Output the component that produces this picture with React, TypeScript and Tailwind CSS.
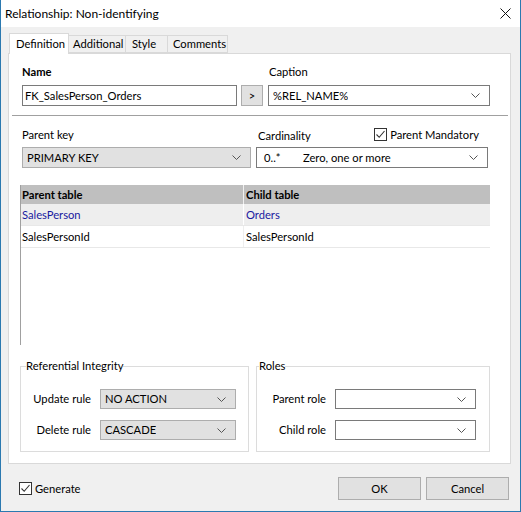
import React from 'react';

const font = { fontFamily: 'Lato, "Liberation Sans", Arial, sans-serif' };

function Chevron() {
  return (
    <svg width="9" height="5" viewBox="0 0 9 5" className="shrink-0">
      <path d="M0.5 0.5 L4.5 4.5 L8.5 0.5" fill="none" stroke="#555" strokeWidth="1" />
    </svg>
  );
}

function Check({ checked }: { checked: boolean }) {
  return (
    <div className="w-[13px] h-[13px] border border-[#333] bg-white flex items-center justify-center shrink-0">
      {checked && (
        <svg width="11" height="11" viewBox="0 0 11 11">
          <path d="M1.5 5.5 L4.2 8.3 L9.5 2" fill="none" stroke="#333" strokeWidth="1.1" />
        </svg>
      )}
    </div>
  );
}

function Select({ value, gray, className }: { value?: React.ReactNode; gray?: boolean; className: string }) {
  return (
    <div
      className={`flex items-center justify-between pl-[4px] pr-[9px] border ${
        gray ? 'bg-[#e1e1e1] border-[#adadad]' : 'bg-white border-[#7a7a7a]'
      } ${className}`}
    >
      <span className="truncate">{value}</span>
      <Chevron />
    </div>
  );
}

export default function App() {
  return (
    <div
      style={font}
      className="w-[521px] h-[512px] border border-[#2b79b0] border-t-0 bg-[#f0f0f0] flex flex-col text-[11.2px] leading-[14px] text-black overflow-hidden"
    >
      {/* title bar */}
      <div className="h-[27px] bg-white flex items-center justify-between pl-[4px] pr-[9px] shrink-0">
        <span className="text-[12px] pt-[1px]">Relationship: Non-identifying</span>
        <svg width="11" height="11" viewBox="0 0 11 11">
          <path d="M0.5 0.5 L10.5 10.5 M10.5 0.5 L0.5 10.5" stroke="#111" strokeWidth="1" />
        </svg>
      </div>

      {/* tabs */}
      <div className="flex items-end ml-[8px] mt-[6px] h-[20px] relative z-10">
        <div className="h-[21px] w-[60px] bg-white border border-[#d9d9d9] border-b-0 flex items-center pl-[6px] -mb-[1px]">
          Definition
        </div>
        <div className="h-[18px] w-[57px] bg-[#f0f0f0] border border-[#d9d9d9] border-l-0 flex items-center pl-[4px]">
          Additional
        </div>
        <div className="h-[18px] w-[42px] bg-[#f0f0f0] border border-[#d9d9d9] border-l-0 flex items-center pl-[6px]">
          Style
        </div>
        <div className="h-[18px] w-[60px] bg-[#f0f0f0] border border-[#d9d9d9] border-l-0 flex items-center pl-[5px]">
          Comments
        </div>
      </div>

      {/* tab panel */}
      <div className="ml-[7px] mr-[9px] h-[411px] bg-white border border-[#d9d9d9] pl-[11px] pr-[19px] flex flex-col">
        {/* name / caption */}
        <div className="flex mt-[11px]">
          <div className="flex flex-col ml-[2px]">
            <span className="font-bold">Name</span>
            <div className="flex mt-[6px]">
              <div className="w-[215px] h-[21px] border border-[#7a7a7a] flex items-center pl-[2px]">FK_SalesPerson_Orders</div>
              <div className="w-[22px] h-[21px] ml-[4px] border border-[#adadad] bg-[#e1e1e1] flex items-center justify-center">&gt;</div>
            </div>
          </div>
          <div className="flex flex-col ml-[5px]">
            <span className="ml-[1px]">Caption</span>
            <Select value="%REL_NAME%" className="mt-[6px] w-[222px] h-[21px]" />
          </div>
        </div>

        <div className="h-px bg-[#a0a0a0] mt-[9px] -ml-[8px] -mr-[17px]" />

        {/* parent key / cardinality */}
        <div className="flex mt-[11px]">
          <div className="flex flex-col ml-[2px]">
            <span className="h-[14px] mt-[1px]">Parent key</span>
            <Select gray value="PRIMARY KEY" className="mt-[5px] w-[229px] h-[21px]" />
          </div>
          <div className="flex flex-col ml-[5px]">
            <div className="flex items-center justify-between h-[15px]">
              <span className="ml-[2px] mt-[2px]">Cardinality</span>
              <div className="flex items-center gap-[3px] mr-[9px]">
                <Check checked />
                <span>Parent Mandatory</span>
              </div>
            </div>
            <Select
              value={
                <span className="flex">
                  <span className="w-[42px] pl-[3px]">0..*</span>
                  <span>Zero, one or more</span>
                </span>
              }
              className="mt-[5px] w-[232px] h-[21px]"
            />
          </div>
        </div>

        {/* columns grid */}
        <div className="mt-[17px] h-[160px] w-[470px] border-l border-[#a0a0a0] flex flex-col">
          <div className="flex h-[19px] bg-[#bfbfbf] font-bold items-center">
            <div className="w-[223px] pl-[1px] h-full flex items-center border-r border-[#f0f0f0]">Parent table</div>
            <div className="pl-[2px]">Child table</div>
          </div>
          <div className="flex h-[22px] bg-[#eeeeee] items-center text-[#1a1aa0] border-b border-[#e8e8e8]">
            <div className="w-[223px] pl-[1px] h-full flex items-center border-r border-white">SalesPerson</div>
            <div className="pl-[2px]">Orders</div>
          </div>
          <div className="flex h-[22px] items-center border-b border-[#e8e8e8]">
            <div className="w-[223px] pl-[1px] h-full flex items-center border-r border-[#eeeeee]">SalesPersonId</div>
            <div className="pl-[2px]">SalesPersonId</div>
          </div>
        </div>

        {/* groups */}
        <div className="flex mt-[14px] gap-[7px]">
          <fieldset className="w-[229px] h-[93px] border border-[#dcdcdc] px-0 pt-0 m-0">
            <legend className="ml-[5px] px-0 leading-[14px]">Referential Integrity</legend>
            <div className="flex flex-col gap-[11px] mt-[16px]">
              <div className="flex items-center">
                <span className="w-[70px] text-right">Update rule</span>
                <Select gray value="NO ACTION" className="ml-[9px] w-[136px] h-[20px]" />
              </div>
              <div className="flex items-center">
                <span className="w-[70px] text-right">Delete rule</span>
                <Select gray value="CASCADE" className="ml-[9px] w-[136px] h-[20px]" />
              </div>
            </div>
          </fieldset>
          <fieldset className="w-[234px] h-[93px] border border-[#dcdcdc] px-0 pt-0 m-0">
            <legend className="ml-[2px] px-0 leading-[14px]">Roles</legend>
            <div className="flex flex-col gap-[11px] mt-[16px]">
              <div className="flex items-center">
                <span className="w-[69px] text-right">Parent role</span>
                <Select className="ml-[9px] w-[141px] h-[20px]" />
              </div>
              <div className="flex items-center">
                <span className="w-[69px] text-right">Child role</span>
                <Select className="ml-[9px] w-[141px] h-[20px]" />
              </div>
            </div>
          </fieldset>
        </div>
      </div>

      {/* bottom bar */}
      <div className="flex items-center mt-[13px] pl-[18px] pr-[11px]">
        <div className="flex items-center gap-[3px]">
          <Check checked />
          <span>Generate</span>
        </div>
        <div className="ml-auto flex gap-[5px]">
          <div className="w-[83px] h-[23px] bg-[#e1e1e1] border border-[#adadad] flex items-center justify-center">OK</div>
          <div className="w-[83px] h-[23px] bg-[#e1e1e1] border border-[#adadad] flex items-center justify-center">Cancel</div>
        </div>
      </div>
    </div>
  );
}
